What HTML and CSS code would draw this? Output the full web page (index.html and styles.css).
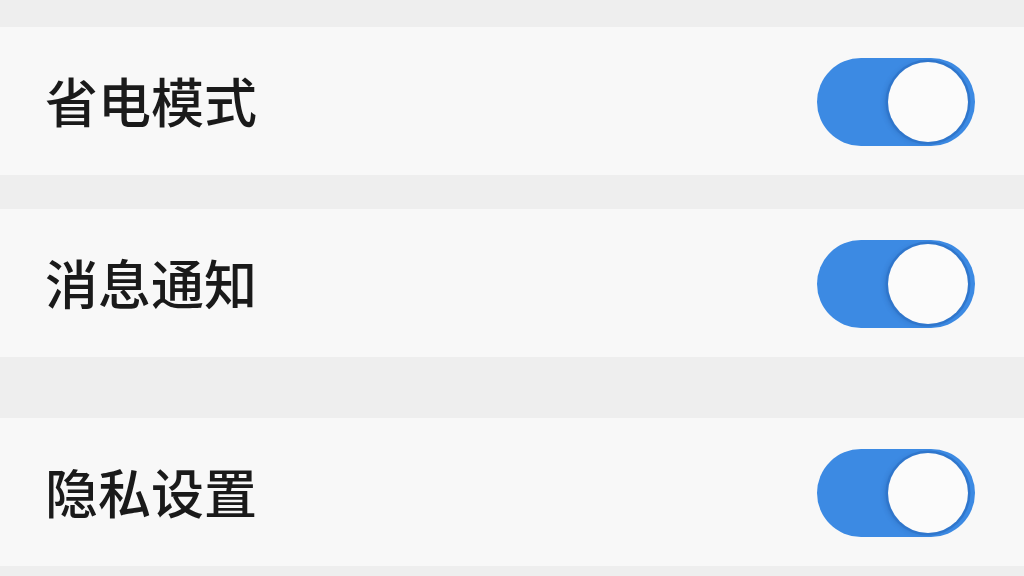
FILE: index.html
```html
<!DOCTYPE html>
<html lang="zh-CN">
<head>
<meta charset="utf-8">
<title>设置</title>
<link rel="stylesheet" href="styles.css">
</head>
<body>
<main class="settings">
  <section class="row row-gap-sm">
    <span class="label">省电模式</span>
    <span class="switch is-on" role="switch" aria-checked="true"><span class="knob"></span></span>
  </section>
  <section class="row row-gap-lg">
    <span class="label">消息通知</span>
    <span class="switch is-on" role="switch" aria-checked="true"><span class="knob"></span></span>
  </section>
  <section class="row">
    <span class="label">隐私设置</span>
    <span class="switch is-on" role="switch" aria-checked="true"><span class="knob"></span></span>
  </section>
</main>
</body>
</html>
```
FILE: styles.css
```css
html, body {
  margin: 0;
  padding: 0;
  background: #eeeeee;
}

body {
  width: 1024px;
  height: 576px;
  overflow: hidden;
  font-family: "Noto Sans CJK SC", "Noto Sans", sans-serif;
}

.settings {
  display: flex;
  flex-direction: column;
  padding-top: 27px;
}

.row {
  height: 148px;
  background: #f8f8f8;
  display: flex;
  align-items: center;
  justify-content: space-between;
  padding: 0 49px 0 45px;
  box-sizing: border-box;
}

.row-gap-sm { margin-bottom: 34px; }
.row-gap-lg { margin-bottom: 61px; }

.label {
  font-size: 53px;
  font-weight: 500;
  color: #1a1a1a;
  line-height: 1;
  margin-bottom: 2px;
}

.switch {
  width: 158px;
  height: 88px;
  border-radius: 44px;
  background: #3c8ae3;
  display: flex;
  align-items: center;
  justify-content: flex-end;
  padding-right: 7px;
  box-sizing: border-box;
  margin-top: 2px;
}

.knob {
  width: 80px;
  height: 80px;
  border-radius: 50%;
  background: #fbfbfb;
  box-shadow: 0 0 0 2.5px #2f76cc, -3px 1px 5px rgba(20, 60, 120, 0.25);
}
```
